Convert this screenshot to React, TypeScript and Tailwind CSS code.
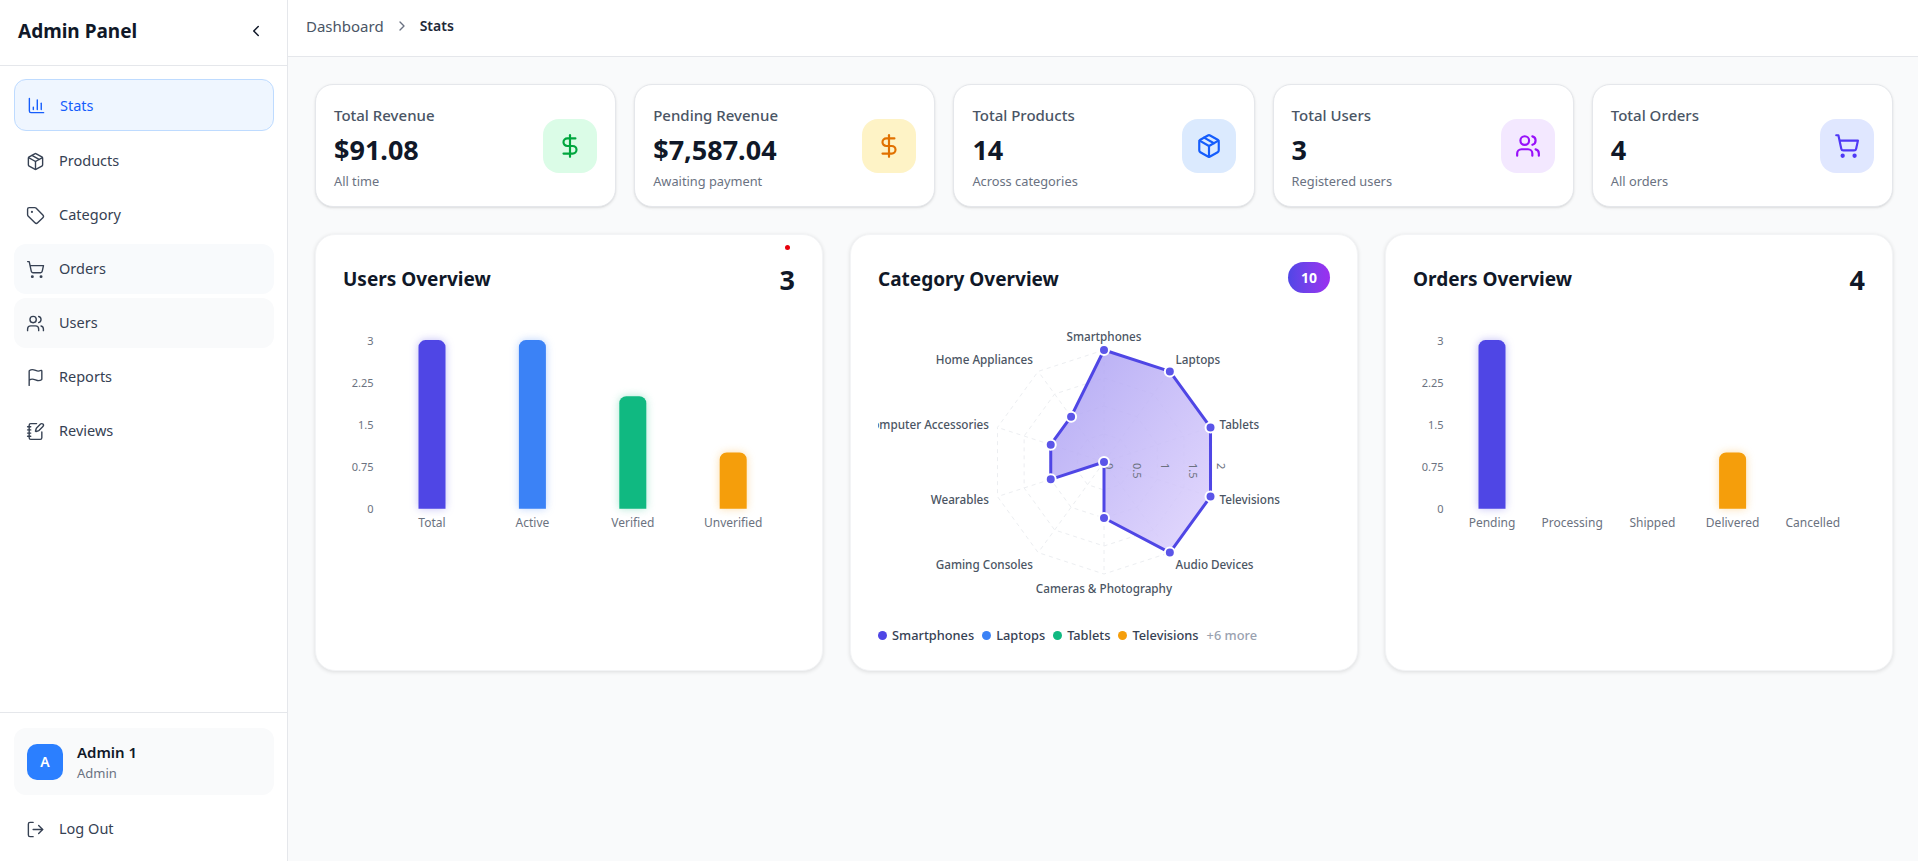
import {
  ChartColumn,
  ChevronLeft,
  ChevronRight,
  DollarSign,
  Flag,
  LogOut,
  NotebookPen,
  Package,
  ShoppingCart,
  Tag,
  Users,
} from "lucide-react";

const nav = [
  { label: "Stats", icon: ChartColumn, cls: "mb-[1px] h-[52px] border border-blue-200 bg-blue-50 pt-[1px] text-blue-600" },
  { label: "Products", icon: Package, cls: "h-[50px] text-gray-700" },
  { label: "Category", icon: Tag, cls: "h-[50px] text-gray-700" },
  { label: "Orders", icon: ShoppingCart, cls: "h-[50px] bg-slate-50 text-gray-700" },
  { label: "Users", icon: Users, cls: "h-[50px] bg-gray-50 text-gray-700" },
  { label: "Reports", icon: Flag, cls: "h-[50px] text-gray-700" },
  { label: "Reviews", icon: NotebookPen, cls: "h-[50px] text-gray-700" },
];

const stats = [
  { title: "Total Revenue", value: "$91.08", sub: "All time", icon: DollarSign, box: "bg-green-100 text-green-600" },
  { title: "Pending Revenue", value: "$7,587.04", sub: "Awaiting payment", icon: DollarSign, box: "bg-amber-100 text-amber-600" },
  { title: "Total Products", value: "14", sub: "Across categories", icon: Package, box: "bg-blue-100 text-blue-600" },
  { title: "Total Users", value: "3", sub: "Registered users", icon: Users, box: "bg-purple-100 text-purple-600" },
  { title: "Total Orders", value: "4", sub: "All orders", icon: ShoppingCart, box: "bg-indigo-100 text-indigo-600" },
];

const COLORS = { indigo: "#4f46e5", blue: "#3b82f6", green: "#10b981", amber: "#f59e0b" };

type Bar = { label: string; value: number; color?: string; glow?: string };

const TICKS = [
  { label: "3", y: 28 },
  { label: "2.25", y: 70 },
  { label: "1.5", y: 112 },
  { label: "0.75", y: 154 },
  { label: "0", y: 196 },
];

function BarChart({ bars, start, pitch, axis }: { bars: Bar[]; start: number; pitch: number; axis: number }) {
  const barWidth = 27;
  const bottom = 196.7;
  const unit = 56.2;
  return (
    <svg viewBox="0 0 451 300" className="block h-[300px] w-full">
      {TICKS.map((t) => (
        <text key={t.label} x={axis} y={t.y + 5} textAnchor="end" fontSize="11" fill="#6b7280">
          {t.label}
        </text>
      ))}
      {bars.map((b, i) => {
        const x = start + pitch * i;
        const top = bottom - b.value * unit;
        return (
          <g key={b.label}>
            {b.value > 0 && (
              <path
                className={b.glow}
                d={`M${x} ${bottom}V${top + 7}a7 7 0 0 1 7 -7H${x + barWidth - 7}a7 7 0 0 1 7 7V${bottom}Z`}
                fill={b.color}
              />
            )}
            <text x={x + barWidth / 2} y={215} textAnchor="middle" fontSize="12" fill="#6b7280">
              {b.label}
            </text>
          </g>
        );
      })}
    </svg>
  );
}

const radarData = [
  { label: "Smartphones", value: 2, x: 225.5, y: 29, anchor: "middle" },
  { label: "Laptops", value: 2, x: 297, y: 52, anchor: "start" },
  { label: "Tablets", value: 2, x: 341, y: 117, anchor: "start" },
  { label: "Televisions", value: 2, x: 341, y: 192, anchor: "start" },
  { label: "Audio Devices", value: 2, x: 297, y: 257, anchor: "start" },
  { label: "Cameras & Photography", value: 1, x: 225.5, y: 281, anchor: "middle" },
  { label: "Gaming Consoles", value: 0, x: 154.5, y: 257, anchor: "end" },
  { label: "Wearables", value: 1, x: 110.5, y: 192, anchor: "end" },
  { label: "Computer Accessories", value: 1, x: 110.5, y: 117, anchor: "end" },
  { label: "Home Appliances", value: 1, x: 154.5, y: 52, anchor: "end" },
] as const;

const CX = 225.5;
const CY = 150;
const R = 112;

function polar(i: number, v: number) {
  const a = (i * 36 * Math.PI) / 180;
  const r = (v / 2) * R;
  return [CX + r * Math.sin(a), CY - r * Math.cos(a)];
}

function ring(v: number) {
  return radarData.map((_, i) => polar(i, v).join(",")).join(" ");
}

function RadarChart() {
  const points = radarData.map((d, i) => polar(i, d.value));
  return (
    <svg viewBox="0 0 451 300" className="block h-[300px] w-full overflow-hidden">
      <defs>
        <linearGradient id="radarFill" x1="0" y1="0" x2="1" y2="1">
          <stop offset="0" stopColor="#a79cf2" />
          <stop offset="1" stopColor="#e0d4fd" />
        </linearGradient>
      </defs>
      {[0.5, 1, 1.5, 2].map((v) => (
        <polygon key={v} points={ring(v)} fill="none" stroke="#eceef1" strokeDasharray="4 4" />
      ))}
      {radarData.map((d, i) => {
        const [x, y] = polar(i, 2);
        return <line key={d.label} x1={CX} y1={CY} x2={x} y2={y} stroke="#eceef1" strokeDasharray="4 4" />;
      })}
      <polygon
        points={points.map((p) => p.join(",")).join(" ")}
        fill="url(#radarFill)"
        fillOpacity="0.85"
        stroke="#4f46e5"
        strokeWidth="3"
        strokeLinejoin="round"
      />
      {["0", "0.5", "1", "1.5", "2"].map((t, i) => (
        <text
          key={t}
          x={0}
          y={0}
          fontSize="11"
          fill="#6b7280"
          transform={`translate(${CX + i * 28 + 1} ${CY + 1}) rotate(90)`}
        >
          {t}
        </text>
      ))}
      {points.map(([x, y], i) => (
        <circle key={i} cx={x} cy={y} r="5" fill="#5b55e8" stroke="#ffffff" strokeWidth="2" />
      ))}
      {radarData.map((d) => (
        <text key={d.label} x={d.x} y={d.y} textAnchor={d.anchor} fontSize="11.7" fontWeight="500" fill="#4b5563">
          {d.label}
        </text>
      ))}
    </svg>
  );
}

const legend = [
  { label: "Smartphones", dot: "bg-[#4f46e5]" },
  { label: "Laptops", dot: "bg-[#3b82f6]" },
  { label: "Tablets", dot: "bg-[#10b981]" },
  { label: "Televisions", dot: "bg-[#f59e0b]" },
];

const userBars: Bar[] = [
  { label: "Total", value: 3, color: COLORS.indigo, glow: "drop-shadow-[0_0_4px_rgba(79,70,229,0.35)]" },
  { label: "Active", value: 3, color: COLORS.blue, glow: "drop-shadow-[0_0_4px_rgba(59,130,246,0.35)]" },
  { label: "Verified", value: 2, color: COLORS.green, glow: "drop-shadow-[0_0_4px_rgba(16,185,129,0.35)]" },
  { label: "Unverified", value: 1, color: COLORS.amber, glow: "drop-shadow-[0_0_4px_rgba(245,158,11,0.35)]" },
];

const orderBars: Bar[] = [
  { label: "Pending", value: 3, color: COLORS.indigo, glow: "drop-shadow-[0_0_4px_rgba(79,70,229,0.35)]" },
  { label: "Processing", value: 0 },
  { label: "Shipped", value: 0 },
  { label: "Delivered", value: 1, color: COLORS.amber, glow: "drop-shadow-[0_0_4px_rgba(245,158,11,0.35)]" },
  { label: "Cancelled", value: 0 },
];

const cardCls = "relative h-[437px] rounded-[20px] border border-gray-100 bg-white p-[27px] shadow-[0_1px_4px_rgba(0,0,0,0.12)]";

const App = () => {
  return (
    <div className="flex h-[861px] overflow-hidden bg-gray-50 font-['Noto_Sans',sans-serif] text-gray-900">
      <aside className="flex w-[288px] shrink-0 flex-col border-r border-gray-200 bg-white">
        <div className="flex h-[66px] shrink-0 items-center justify-between border-b border-gray-200 pb-[3px] pl-[18px] pr-[22px]">
          <h1 className="text-[19px] font-bold">Admin Panel</h1>
          <ChevronLeft size={18} strokeWidth={2} />
        </div>
        <nav className="flex flex-1 flex-col gap-1 pl-[14px] pr-[13px] pt-[13px]">
          {nav.map((item) => (
            <a key={item.label} className={`flex items-center gap-[14px] rounded-xl px-[12px] text-[14.5px] ${item.cls}`}>
              <item.icon size={19} strokeWidth={1.75} />
              <span>{item.label}</span>
            </a>
          ))}
        </nav>
        <div className="border-t border-gray-200 pb-[7px] pl-[14px] pr-[13px] pt-[15px]">
          <div className="flex h-[67px] items-center gap-[14px] rounded-xl bg-gray-50 px-[13px]">
            <div className="flex size-9 items-center justify-center rounded-[10px] bg-blue-500 text-sm font-semibold text-white">
              A
            </div>
            <div className="pt-[2px]">
              <p className="text-[15px] font-semibold leading-5">Admin 1</p>
              <p className="mt-[1px] text-[13px] leading-5 text-gray-500">Admin</p>
            </div>
          </div>
          <a className="mt-[9px] flex h-[50px] items-center gap-[14px] px-[12px] text-[14.5px] text-gray-700">
            <LogOut size={19} strokeWidth={1.75} />
            <span>Log Out</span>
          </a>
        </div>
      </aside>

      <main className="flex min-w-0 flex-1 flex-col">
        <header className="flex h-[57px] shrink-0 items-center gap-[10px] border-b border-gray-200 bg-white px-[18px] pb-[4px] text-[15px]">
          <span className="text-gray-600">Dashboard</span>
          <ChevronRight size={16} className="text-gray-500" />
          <span className="text-sm font-semibold text-gray-800">Stats</span>
        </header>

        <div className="flex flex-col gap-[27px] pb-6 pl-[27px] pr-[25px] pt-[27px]">
          <section className="grid grid-cols-5 gap-[18px]">
            {stats.map((s) => (
              <div
                key={s.title}
                className="flex h-[123px] items-center justify-between rounded-[18px] border border-gray-200 bg-white pl-[18px] pr-[18px] shadow-sm"
              >
                <div className="pt-[4px]">
                  <p className="text-[15px] font-medium leading-5 text-gray-600">{s.title}</p>
                  <p className="mt-[7px] text-[27px] font-bold leading-9">{s.value}</p>
                  <p className="mt-[3px] text-[12.8px] leading-5 text-gray-500">{s.sub}</p>
                </div>
                <div className={`flex size-[54px] items-center justify-center rounded-2xl ${s.box}`}>
                  <s.icon size={26} strokeWidth={2} />
                </div>
              </div>
            ))}
          </section>

          <section className="grid grid-cols-3 gap-[27px]">
            <div className={cardCls}>
              <span className="absolute right-[32px] top-[10px] size-[5px] rounded-full bg-red-600" />
              <div className="flex h-9 items-start justify-between">
                <h2 className="text-[19px] font-bold leading-[34px]">Users Overview</h2>
                <span className="text-[27px] font-bold leading-9">3</span>
              </div>
              <div className="mt-[14px]">
                <BarChart bars={userBars} start={75} pitch={100.4} axis={30} />
              </div>
            </div>

            <div className={cardCls}>
              <div className="flex h-9 items-start justify-between">
                <h2 className="text-[19px] font-bold leading-[34px]">Category Overview</h2>
                <span className="flex h-[31px] w-[42px] items-center justify-center rounded-full bg-gradient-to-r from-[#5046e6] to-[#9b2ff0] text-sm font-bold text-white">
                  10
                </span>
              </div>
              <div className="mt-[14px]">
                <RadarChart />
              </div>
              <div className="mt-[14px] flex items-center gap-[8px] text-[12.8px] font-medium text-gray-700">
                {legend.map((l) => (
                  <span key={l.label} className="flex items-center gap-[5px]">
                    <span className={`size-[9px] rounded-full ${l.dot}`} />
                    {l.label}
                  </span>
                ))}
                <span className="text-gray-400">+6 more</span>
              </div>
            </div>

            <div className={cardCls}>
              <div className="flex h-9 items-start justify-between">
                <h2 className="text-[19px] font-bold leading-[34px]">Orders Overview</h2>
                <span className="text-[27px] font-bold leading-9">4</span>
              </div>
              <div className="mt-[14px]">
                <BarChart bars={orderBars} start={65} pitch={80.2} axis={30} />
              </div>
            </div>
          </section>
        </div>
      </main>
    </div>
  );
};

export default App;
